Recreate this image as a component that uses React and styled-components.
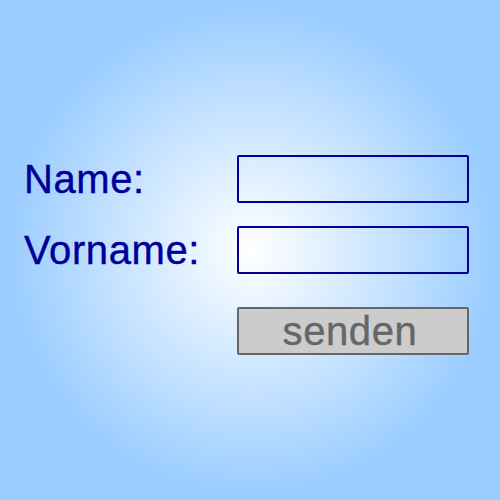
import styled, { createGlobalStyle } from 'styled-components';

const GlobalStyle = createGlobalStyle`
  html, body {
    margin: 0;
    padding: 0;
  }
  body {
    font-family: "Liberation Sans", Arial, sans-serif;
  }
`;

function App() {
  return (
    <Page>
      <GlobalStyle />
      <Form onSubmit={e => e.preventDefault()}>
        <Label htmlFor="name">Name:</Label>
        <TextField id="name" type="text" />
        <Label htmlFor="vorname">Vorname:</Label>
        <TextField id="vorname" type="text" />
        <span />
        <SubmitButton type="submit">senden</SubmitButton>
      </Form>
    </Page>
  );
}

export default App;

const Page = styled.div`
  width: 500px;
  height: 500px;
  box-sizing: border-box;
  padding: 155px 0 0 24px;
  background: radial-gradient(circle closest-side at 252px 250px, #ffffff 0%, #99ccff 100%);
  overflow: hidden;
`;

const Form = styled.form`
  display: grid;
  grid-template-columns: 213px 232px;
  grid-template-rows: 48px 48px 58px;
  row-gap: 23px;
  align-items: center;
`;

const Label = styled.label`
  font-size: 40px;
  line-height: 48px;
  letter-spacing: 0.6px;
  color: #000099;
  -webkit-text-stroke: 0.4px #000099;
`;

const TextField = styled.input`
  box-sizing: border-box;
  width: 232px;
  height: 48px;
  border: 2px solid #000099;
  border-radius: 2px;
  background: transparent;
  font-family: inherit;
  font-size: 24px;
  padding: 0 8px;
  outline: none;
`;

const SubmitButton = styled.button`
  align-self: end;
  box-sizing: border-box;
  width: 232px;
  height: 48px;
  border: 2px solid #666666;
  border-radius: 2px;
  background: #cccccc;
  color: #666666;
  font-family: "Liberation Sans", Arial, sans-serif;
  font-size: 40px;
  line-height: 44px;
  letter-spacing: 0.6px;
  -webkit-text-stroke: 0.4px #666666;
  padding: 0 6px 0 0;
`;
